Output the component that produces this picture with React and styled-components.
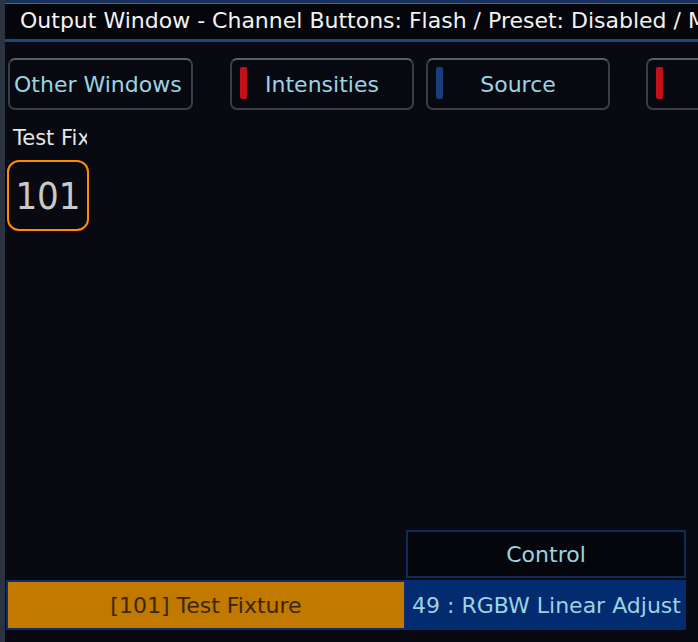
import styled, { createGlobalStyle } from "styled-components";

const GlobalStyle = createGlobalStyle`
  html, body {
    margin: 0;
    padding: 0;
    background: #090a11;
  }
  * {
    box-sizing: border-box;
  }
`;

const Window = styled.div`
  width: 698px;
  height: 642px;
  overflow: hidden;
  display: flex;
  flex-direction: column;
  background: #090a11;
  border-left: 5px solid #2b3240;
  font-family: "DejaVu Sans", sans-serif;
  font-size: 22px;
`;

const TitleBar = styled.div`
  height: 42px;
  border-top: 3px solid #16305c;
  border-bottom: 3px solid #1d4884;
  box-shadow: inset 0 1px 0 #5a5f6a;
  background: #05060b;
  color: #f2f2f2;
  line-height: 36px;
  padding-left: 15px;
  white-space: nowrap;
  overflow: hidden;
`;

const ButtonRow = styled.div`
  display: flex;
  padding: 16px 0 0 3px;
  height: 68px;
`;

const TabButton = styled.div`
  flex: none;
  position: relative;
  width: ${(p) => p.$w}px;
  margin-left: ${(p) => p.$gap || 0}px;
  height: 52px;
  border-radius: 7px;
  border: 2px solid #3a3d45;
  border-top-color: #5c5f66;
  background: #080910;
  color: #9dd2e2;
  display: flex;
  align-items: center;
  justify-content: ${(p) => (p.$left ? "flex-start" : "center")};
  padding-left: ${(p) => (p.$left ? 4 : 0)}px;
  white-space: nowrap;
`;

const Marker = styled.span`
  position: absolute;
  left: 8px;
  top: 7px;
  width: 7px;
  height: 32px;
  border-radius: 2px;
  background: ${(p) => p.$color};
`;

const FixtureArea = styled.div`
  padding: 16px 0 0 2px;
`;

const FixtureName = styled.div`
  width: 80px;
  overflow: hidden;
  white-space: nowrap;
  color: #e6e6e6;
  font-size: 21px;
  padding-left: 6px;
  height: 28px;
`;

const ChannelBox = styled.div`
  margin-top: 6px;
  width: 82px;
  height: 71px;
  border: 2px solid #ff8c00;
  border-radius: 12px;
  color: #c9c9c9;
  font-family: "DejaVu Sans Condensed", "DejaVu Sans", sans-serif;
  font-size: 38px;
  display: flex;
  align-items: center;
  justify-content: center;
`;

const Bottom = styled.div`
  margin-top: auto;
  padding-bottom: 12px;
  display: grid;
  grid-template-columns: 400px 280px;
  padding-left: 1px;
`;

const HeaderCell = styled.div`
  grid-column: 2;
  height: 48px;
  border: 2px solid #0e2b5a;
  background: #05060b;
  color: #9dd2e2;
  display: flex;
  align-items: center;
  justify-content: center;
  margin-bottom: 2px;
`;

const FixtureCell = styled.div`
  height: 50px;
  background: #c17900;
  border: 2px solid #0b2d6e;
  color: #3b2700;
  display: flex;
  align-items: center;
  justify-content: center;
`;

const ValueCell = styled.div`
  height: 50px;
  background: #022b70;
  color: #9dd2e2;
  display: flex;
  align-items: center;
  padding-left: 6px;
  white-space: nowrap;
  overflow: hidden;
`;

export default function App() {
  return (
    <>
      <GlobalStyle />
      <Window>
        <TitleBar>
          Output Window - Channel Buttons: Flash / Preset: Disabled / Mode: Live
        </TitleBar>
        <ButtonRow>
          <TabButton $w={185} $left>
            Other Windows
          </TabButton>
          <TabButton $w={184} $gap={37}>
            <Marker $color="#c3111b" />
            Intensities
          </TabButton>
          <TabButton $w={184} $gap={12}>
            <Marker $color="#163d7c" />
            Source
          </TabButton>
          <TabButton $w={184} $gap={36}>
            <Marker $color="#c3111b" />
          </TabButton>
        </ButtonRow>
        <FixtureArea>
          <FixtureName>Test Fixture</FixtureName>
          <ChannelBox>101</ChannelBox>
        </FixtureArea>
        <Bottom>
          <HeaderCell>Control</HeaderCell>
          <FixtureCell>[101] Test Fixture</FixtureCell>
          <ValueCell>49 : RGBW Linear Adjust</ValueCell>
        </Bottom>
      </Window>
    </>
  );
}
